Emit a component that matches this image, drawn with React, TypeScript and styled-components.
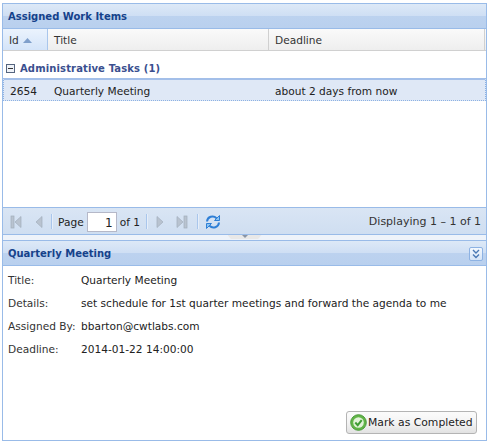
import styled, { createGlobalStyle } from "styled-components";

const Global = createGlobalStyle`
  html, body { margin: 0; padding: 0; background: #fff; }
  body { font-family: "DejaVu Sans", sans-serif; font-size: 10.6px; color: #222; }
`;

const Page = styled.div`
  width: 489px;
  height: 445px;
  box-sizing: border-box;
  padding: 3px 2px 4px 2px;
  display: flex;
  flex-direction: column;
  overflow: hidden;
`;

const Frame = styled.div`
  flex: 1;
  display: flex;
  flex-direction: column;
  border: 1px solid #99bbe8;
`;

const PanelHeader = styled.div<{ $lined?: boolean }>`
  height: ${(p) => (p.$lined ? 26 : 25)}px;
  flex: none;
  box-sizing: border-box;
  padding: 1px 5px 0;
  display: flex;
  align-items: center;
  justify-content: space-between;
  background: linear-gradient(#dde9f7 0%, #cfdff4 48%, #bcd2ef 50%, #b9d0ee 100%);
  border-top: ${(p) => (p.$lined ? "1px solid #99bbe8" : "none")};
  border-bottom: 1px solid #99bbe8;
  color: #15428b;
  font-weight: bold;
  font-size: 10px;
`;

const ColumnRow = styled.div`
  height: 22px;
  flex: none;
  box-sizing: border-box;
  display: flex;
  background: linear-gradient(#fafafa, #eeeeee);
  border-bottom: 1px solid #d0d0d0;
`;

const ColumnCell = styled.div<{ $width: number; $active?: boolean }>`
  width: ${(p) => p.$width}px;
  flex: none;
  box-sizing: border-box;
  padding: 1px 0 0 6px;
  display: flex;
  align-items: center;
  gap: 4px;
  color: #333;
  border-right: 1px solid ${(p) => (p.$active ? "#a9c6ec" : "#d0d0d0")};
  background: ${(p) => (p.$active ? "linear-gradient(#ebf3fd, #d4e4f9)" : "transparent")};
`;

const GridBody = styled.div`
  height: 156px;
  flex: none;
  background: #fff;
`;

const GroupRow = styled.div`
  display: flex;
  align-items: center;
  gap: 5px;
  height: 17px;
  margin-top: 8px;
  padding: 1px 0 0 3px;
  box-sizing: border-box;
  color: #3a4f8f;
  font-weight: bold;
  font-size: 10px;
  letter-spacing: 0.13px;
`;

const DataRow = styled.div`
  display: flex;
  height: 23px;
  margin: 2px 0 0;
  padding-top: 1px;
  box-sizing: border-box;
  align-items: center;
  background: #dfe8f6;
  border-top: 2px solid #a3bfe9;
  border-right: 1px dotted #8db2e3;
  border-bottom: 1px dotted #8db2e3;
  border-left: 1px dotted #8db2e3;
`;

const DataCell = styled.div<{ $width: number }>`
  width: ${(p) => p.$width}px;
  flex: none;
  box-sizing: border-box;
  padding-left: 6px;
  color: #222;
`;

const Toolbar = styled.div`
  height: 28px;
  flex: none;
  box-sizing: border-box;
  padding: 1px 5px 0 7px;
  display: flex;
  align-items: center;
  background: linear-gradient(#d9e5f4, #cfdef1);
  border-top: 1px solid #99bbe8;
  border-bottom: 1px solid #99bbe8;
`;

const ToolIcon = styled.span<{ $gap?: number; $lead?: number }>`
  display: flex;
  margin-left: ${(p) => p.$lead ?? 0}px;
  margin-right: ${(p) => p.$gap ?? 0}px;
`;

const Divider = styled.span<{ $left?: number; $right?: number }>`
  width: 1px;
  height: 15px;
  background: #a9c6ec;
  box-shadow: 1px 0 0 #e6eef9;
  margin: 0 ${(p) => p.$right ?? 6}px 0 ${(p) => p.$left ?? 5}px;
`;

const PageInput = styled.div`
  width: 30px;
  height: 20px;
  margin: 0 3px;
  box-sizing: border-box;
  padding-right: 3px;
  background: #fff;
  border: 1px solid #b5b8c8;
  font-size: 12px;
  line-height: 20px;
  text-align: right;
`;

const Displaying = styled.span`
  margin-left: auto;
  color: #333;
  font-size: 11px;
`;

const Splitter = styled.div`
  height: 5px;
  flex: none;
  display: flex;
  justify-content: center;
  background: #eef3fa;
`;

const SplitHandle = styled.div`
  width: 34px;
  height: 4px;
  display: flex;
  justify-content: center;
  background: #e8e8e8;
  clip-path: polygon(0 0, 100% 0, 90% 100%, 10% 100%);
`;

const CollapseButton = styled.div`
  width: 14px;
  height: 14px;
  margin-right: -2px;
  display: flex;
  align-items: center;
  justify-content: center;
  box-sizing: border-box;
  border: 1px solid #8db2e3;
  border-radius: 2px;
  background: linear-gradient(#f3f8fe, #d5e4f7);
`;

const DetailBody = styled.div`
  flex: 1;
  box-sizing: border-box;
  padding: 2px 9px 6px 5px;
  display: flex;
  flex-direction: column;
  background: #fff;
`;

const DetailRow = styled.div`
  display: flex;
  height: 23px;
  align-items: center;
`;

const DetailLabel = styled.div`
  width: 73px;
  flex: none;
  color: #333;
  white-space: nowrap;
`;

const DetailValue = styled.div`
  color: #222;
  white-space: nowrap;
`;

const Actions = styled.div`
  margin-top: auto;
  display: flex;
  justify-content: flex-end;
`;

const CompleteButton = styled.button`
  width: 131px;
  height: 23px;
  padding: 0 0 0 3px;
  display: flex;
  align-items: center;
  gap: 1px;
  font: 10.8px "DejaVu Sans", sans-serif;
  color: #222;
  border: 1px solid #b4b4b4;
  border-radius: 3px;
  background: linear-gradient(#fbfbfb 0%, #f4f4f4 50%, #e2e2e2 100%);
`;

const First = ({ flip }: { flip?: boolean }) => (
  <svg width="14" height="14" viewBox="0 0 14 14" style={flip ? { transform: "scaleX(-1)" } : undefined}>
    <rect x="1" y="1" width="3" height="12" fill="#b9c3d0" stroke="#a2adbb" strokeWidth="0.7" />
    <path d="M11 1.5v11L5 7z" fill="#b9c3d0" stroke="#a2adbb" strokeWidth="0.7" />
  </svg>
);

const Prev = ({ flip }: { flip?: boolean }) => (
  <svg width="12" height="14" viewBox="0 0 12 14" style={flip ? { transform: "scaleX(-1)" } : undefined}>
    <path d="M9 1.5v11L3 7z" fill="#b9c3d0" stroke="#a2adbb" strokeWidth="0.7" />
  </svg>
);

const Refresh = () => (
  <svg width="16" height="16" viewBox="0 0 16 16" fill="none" stroke="#2f7fd6" strokeWidth="2">
    <path d="M2 7.5a5.5 5.5 0 0 1 9.5-3.3" />
    <path d="M14.5 1.5v5h-5z" fill="#8cc4f2" strokeWidth="1" />
    <path d="M14 8.5a5.5 5.5 0 0 1-9.5 3.3" />
    <path d="M1.5 14.5v-5h5z" fill="#8cc4f2" strokeWidth="1" />
  </svg>
);

const DoubleDown = () => (
  <svg width="10" height="10" viewBox="0 0 10 10" fill="none" stroke="#4a79b5" strokeWidth="1.4">
    <path d="M2 1l3 3 3-3M2 5.5l3 3 3-3" />
  </svg>
);

const CheckIcon = () => (
  <svg width="17" height="17" viewBox="0 0 17 17">
    <circle cx="8.5" cy="8.5" r="7.8" fill="#62b548" stroke="#4b9a3a" />
    <circle cx="8.5" cy="8.5" r="5.3" fill="#e2f3d8" />
    <path d="M5.3 8.5l2.4 2.6 4-5" fill="none" stroke="#3f9c34" strokeWidth="2" />
  </svg>
);

const details = [
  ["Title:", "Quarterly Meeting"],
  ["Details:", "set schedule for 1st quarter meetings and forward the agenda to me"],
  ["Assigned By:", "bbarton@cwtlabs.com"],
  ["Deadline:", "2014-01-22 14:00:00"],
];

export default function App() {
  return (
    <Page>
      <Global />
      <Frame>
        <PanelHeader>Assigned Work Items</PanelHeader>
        <ColumnRow>
          <ColumnCell $width={45} $active>
            Id
            <svg width="9" height="5" viewBox="0 0 9 5">
              <path d="M4.5 0L9 5H0z" fill="#7f9fcb" />
            </svg>
          </ColumnCell>
          <ColumnCell $width={221}>Title</ColumnCell>
          <ColumnCell $width={216}>Deadline</ColumnCell>
        </ColumnRow>
        <GridBody>
          <GroupRow>
            <svg width="9" height="9" viewBox="0 0 9 9">
              <rect x="0.5" y="0.5" width="8" height="8" fill="#eef2f8" stroke="#55657f" />
              <path d="M2 4.5h5" stroke="#333" />
            </svg>
            Administrative Tasks (1)
          </GroupRow>
          <DataRow>
            <DataCell $width={44}>2654</DataCell>
            <DataCell $width={221}>Quarterly Meeting</DataCell>
            <DataCell $width={210}>about 2 days from now</DataCell>
          </DataRow>
        </GridBody>
        <Toolbar>
          <ToolIcon $gap={9}><First /></ToolIcon>
          <ToolIcon $gap={1}><Prev /></ToolIcon>
          <Divider />
          Page
          <PageInput>1</PageInput>
          of 1
          <Divider $left={6} />
          <ToolIcon $lead={1} $gap={8}><Prev flip /></ToolIcon>
          <ToolIcon $gap={4}><First flip /></ToolIcon>
          <Divider $right={7} />
          <Refresh />
          <Displaying>Displaying 1 – 1 of 1</Displaying>
        </Toolbar>
        <Splitter>
          <SplitHandle>
            <svg width="6" height="3" viewBox="0 0 6 3">
              <path d="M0 0h6L3 3z" fill="#8a95a5" />
            </svg>
          </SplitHandle>
        </Splitter>
        <PanelHeader $lined>
          Quarterly Meeting
          <CollapseButton><DoubleDown /></CollapseButton>
        </PanelHeader>
        <DetailBody>
          {details.map(([label, value]) => (
            <DetailRow key={label}>
              <DetailLabel>{label}</DetailLabel>
              <DetailValue>{value}</DetailValue>
            </DetailRow>
          ))}
          <Actions>
            <CompleteButton>
              <CheckIcon />
              Mark as Completed
            </CompleteButton>
          </Actions>
        </DetailBody>
      </Frame>
    </Page>
  );
}
